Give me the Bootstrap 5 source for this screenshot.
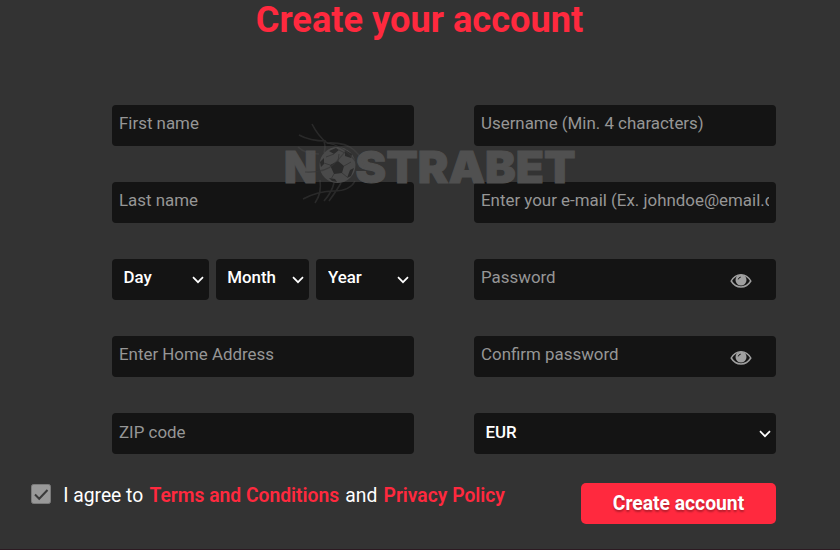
<!DOCTYPE html>
<html lang="en">
<head>
<meta charset="utf-8">
<meta name="viewport" content="width=device-width, initial-scale=1">
<title>Create your account</title>
<link href="https://cdn.jsdelivr.net/npm/bootstrap@5.3.0/dist/css/bootstrap.min.css" rel="stylesheet">
<style>
  body { background: #333; color: #fff; font-family: Roboto, sans-serif; width: 840px; height: 550px; }
  .accent { color: #ff293e; }
  .page-title { font-size: 36.2px; font-weight: 700; line-height: 40px; height: 104.5px; padding-right: 1px; }
  .signup-grid { display: grid; grid-template-columns: 302px 302px; column-gap: 60px; row-gap: 36.15px; margin-left: 112px; }
  .signup-grid .form-control, .signup-grid .form-select {
    height: 41px; background-color: #141414; border: 0; border-radius: 4px;
    font-size: 16.9px; line-height: 24px; padding: 6px 7px 10px; color: #fff;
  }
  .signup-grid .form-control::placeholder { color: #969696; opacity: 1; }
  .signup-grid .form-select {
    padding-left: 11.5px; font-weight: 500;
    background-image: url("data:image/svg+xml,%3Csvg xmlns='http://www.w3.org/2000/svg' viewBox='0 0 12 8'%3E%3Cpath d='M1 1.2l5 5 5-5' fill='none' stroke='%23fff' stroke-width='1.7'/%3E%3C/svg%3E");
    background-size: 12px 8px; background-position: right 5px top 17px;
  }
  .birth-row { display: grid; grid-template-columns: 96.5px 93.5px 97.5px; column-gap: 7.2px; }
  .eye { right: 24.5px; top: 14px; }
  .agree-row { padding: 28.6px 64px 0 31.2px; }
  .agree-text { font-size: 19.3px; line-height: 24px; padding-top: 1px; }
  .agree-text a { font-weight: 600; margin: 0 1.4px; }
  .tick { width: 20px; height: 20px; margin: 1px 12px 0 0; }
  .btn-create { width: 195px; height: 41px; background: #ff293e; color: #fff; border: 0; border-radius: 5px; font-size: 19.3px; font-weight: 700; text-shadow: 0 2px 2px rgba(0,0,0,.3); }
  .btn-create span { display: block; padding-top: 2px; }
  .page-foot { height: 1px; background: #2c1a22; }
  .watermark { left: 280px; top: 120px; pointer-events: none; }
</style>
</head>
<body class="position-relative overflow-hidden d-flex flex-column">
<h1 class="page-title accent text-center m-0">Create your account</h1>
<form class="d-flex flex-column flex-grow-1">
  <div class="signup-grid">
    <input class="form-control" placeholder="First name">
    <input class="form-control" placeholder="Username (Min. 4 characters)">
    <input class="form-control" placeholder="Last name">
    <input class="form-control" placeholder="Enter your e-mail (Ex. johndoe@email.com)">
    <div class="birth-row">
      <select class="form-select"><option>Day</option></select>
      <select class="form-select"><option>Month</option></select>
      <select class="form-select"><option>Year</option></select>
    </div>
    <div class="position-relative">
      <input type="password" class="form-control" placeholder="Password">
      <svg class="eye position-absolute" width="22" height="16" viewBox="0 0 22 16"><path d="M1.2 8C6-.5 16-.5 20.8 8C16 16 6 16 1.2 8Z" fill="none" stroke="#a0a0a0" stroke-width="1.5"/><circle cx="11" cy="7" r="5.5" fill="#a0a0a0"/><path d="M8.3 6.4Q8.5 4.5 10.8 4.1" fill="none" stroke="#1c1c1c" stroke-width="1"/></svg>
    </div>
    <input class="form-control" placeholder="Enter Home Address">
    <div class="position-relative">
      <input type="password" class="form-control" placeholder="Confirm password">
      <svg class="eye position-absolute" width="22" height="16" viewBox="0 0 22 16"><path d="M1.2 8C6-.5 16-.5 20.8 8C16 16 6 16 1.2 8Z" fill="none" stroke="#a0a0a0" stroke-width="1.5"/><circle cx="11" cy="7" r="5.5" fill="#a0a0a0"/><path d="M8.3 6.4Q8.5 4.5 10.8 4.1" fill="none" stroke="#1c1c1c" stroke-width="1"/></svg>
    </div>
    <input class="form-control" placeholder="ZIP code">
    <select class="form-select"><option>EUR</option></select>
  </div>
  <div class="agree-row d-flex justify-content-between align-items-start">
    <div class="d-flex">
      <svg class="tick flex-shrink-0" viewBox="0 0 20 20"><rect x=".5" y=".5" width="19" height="19" rx="2" fill="#999" stroke="#7a7a7a"/><path d="M4 10.5L8.2 14.7L16.5 6" fill="none" stroke="#3a3a3a" stroke-width="2"/></svg>
      <div class="agree-text text-nowrap">I agree to <a class="accent text-decoration-none" href="#">Terms and Conditions</a> and <a class="accent text-decoration-none" href="#">Privacy Policy</a></div>
    </div>
    <button type="button" class="btn btn-create p-0"><span>Create account</span></button>
  </div>
</form>
<div class="page-foot"></div>
<svg class="watermark position-absolute" width="300" height="90" viewBox="280 120 300 90">
  <g font-family="Inter, sans-serif" font-weight="900" font-size="43.5" fill="#505050" stroke="#505050" stroke-width="1">
    <text x="284" y="182.5" textLength="33" lengthAdjust="spacingAndGlyphs">N</text>
    <text x="355.5" y="182.5" textLength="220" lengthAdjust="spacingAndGlyphs">STRABET</text>
  </g>
  <circle cx="337.5" cy="165" r="18" fill="#4a4a4a"/>
  <path fill="#2b2b2b" d="M330 165l8-4 6 5-2 7-8 1zM329 151l7-3 3 2-5 4zM345 150l7 4-1 4-6-2zM320 162l4-4v6l-3 3zM350 170l4-2-3 8-4 2zM329 178l6 1 2 3-5-1z"/>
  <path fill="none" stroke="#383838" d="M338 161l1-7M344 166l7-4M342 173l5 4M334 174l-3 5M330 165l-6-2M334 154l-8 3M339 150l6 3"/>
  <g fill="none" stroke="#505050" stroke-width="1.6" opacity=".36"><path d="M312 124Q318 136 327 143M299 135Q310 141 326 141M298 147Q305 154 319 154M303 199Q318 191 334 191T355 181M315 203Q322 193 320 180M324 201Q332 192 334 183M329 201Q337 190 341 183M324 142Q326 146 324 153M327 143Q345 142 354 150T365 168"/></g>
  <g fill="none" stroke="#363636" stroke-width="1.1" opacity=".7"><path d="M305 172Q325 173 334 164T347 149M327 143Q340 145 349 154T359 169"/></g>
</svg>
<script src="https://cdn.jsdelivr.net/npm/bootstrap@5.3.0/dist/js/bootstrap.bundle.min.js"></script>
</body>
</html>
